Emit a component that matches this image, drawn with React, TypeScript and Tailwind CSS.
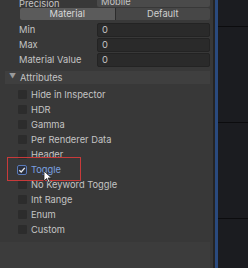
import React from "react";

const items = [
  "Hide in Inspector",
  "HDR",
  "Gamma",
  "Per Renderer Data",
  "Header",
  "Toggle",
  "No Keyword Toggle",
  "Int Range",
  "Enum",
  "Custom",
];

function Field({ label }: { label: string }) {
  return (
    <div className="flex h-[15px] items-center">
      <span className="w-[97px] whitespace-nowrap pl-[19px] text-[#c4c4c4]">{label}</span>
      <div className="flex h-[14px] flex-1 items-center rounded-[2px] border border-[#232323] bg-[#2a2a2a] pl-[4px] text-[#c4c4c4]">
        0
      </div>
    </div>
  );
}

export default function App() {
  return (
    <div
      className="flex h-[268px] w-[248px] overflow-hidden bg-[#1c1d21] text-[9.3px]"
      style={{ fontFamily: "Inter, 'Liberation Sans', sans-serif" }}
    >
      <div className="relative flex w-[213px] flex-col bg-[#383838] pr-[3px]">
        <div className="flex h-[7px] items-end overflow-hidden">
          <span className="w-[97px] pl-[19px] leading-[6px] text-[#c4c4c4]">Precision</span>
          <div className="h-[7px] flex-1 rounded-b-[2px] bg-[#4a4a4a] pl-[4px] leading-[4px] text-[#c4c4c4]">
            Mobile
          </div>
        </div>
        <div className="mt-[1px] ml-[20px] flex h-[12px]">
          <div className="flex flex-1 items-center justify-center rounded-l-[2px] bg-[#5b5b5b] text-[#d8d8d8]">
            Material
          </div>
          <div className="flex flex-1 items-center justify-center rounded-r-[2px] border-l border-[#2c2c2c] bg-[#474747] text-[#d0d0d0]">
            Default
          </div>
        </div>
        <div className="mt-[2px] flex flex-col">
          <Field label="Min" />
          <Field label="Max" />
          <Field label="Material Value" />
        </div>
        <div className="mt-[4px] ml-[5px] flex h-[13px] items-center bg-[#3f3f3f] text-[#c4c4c4]">
          <span className="ml-[4px] mr-[4px] text-[7px] text-[#9a9a9a]">▼</span>
          <span>Attributes</span>
        </div>
        <div className="mt-[3px] flex flex-col">
          {items.map((name) => {
            const on = name === "Toggle";
            return (
              <div key={name} className="flex h-[15px] items-center">
                <div
                  className={
                    on
                      ? "ml-[17px] flex h-[10px] w-[10px] items-center justify-center rounded-[2px] border border-[#5a7ab8] bg-[#2a2f3d]"
                      : "ml-[18px] h-[9px] w-[9px] rounded-[1px] bg-[#2c2c2c]"
                  }
                >
                  {on && (
                    <svg width="8" height="8" viewBox="0 0 8 8">
                      <path d="M1.3 4.2 L3.2 6 L6.8 1.8" stroke="#e8e8e8" strokeWidth="1.3" fill="none" />
                    </svg>
                  )}
                </div>
                <span className={on ? "ml-[4px] text-[#7aa0e0]" : "ml-[4px] text-[#c4c4c4]"}>{name}</span>
              </div>
            );
          })}
        </div>
        <div className="mt-auto h-[26px] bg-[#3c3c3c]" />
        <div className="absolute left-[7px] top-[157px] h-[24px] w-[74px] border border-[#c83a3a]" />
        <svg className="absolute left-[43px] top-[170px]" width="10" height="14" viewBox="0 0 10 14">
          <path d="M1 1 L1 11 L3.5 8.5 L5.5 12.5 L7 11.8 L5 8 L8.5 8 Z" fill="#ffffff" stroke="#222" strokeWidth="0.8" />
        </svg>
      </div>
      <div className="w-[2px] bg-[#242424]" />
      <div className="w-[3px] bg-[#2a4a7e]" />
      <div className="flex flex-1 flex-col bg-[#1b1c20]">
        <div className="mt-[26px] h-[1px] bg-[#0c0c0e]" />
        <div className="mt-[95px] h-[1px] bg-[#0c0c0e]" />
        <div className="mt-[95px] h-[1px] bg-[#0c0c0e]" />
      </div>
    </div>
  );
}
